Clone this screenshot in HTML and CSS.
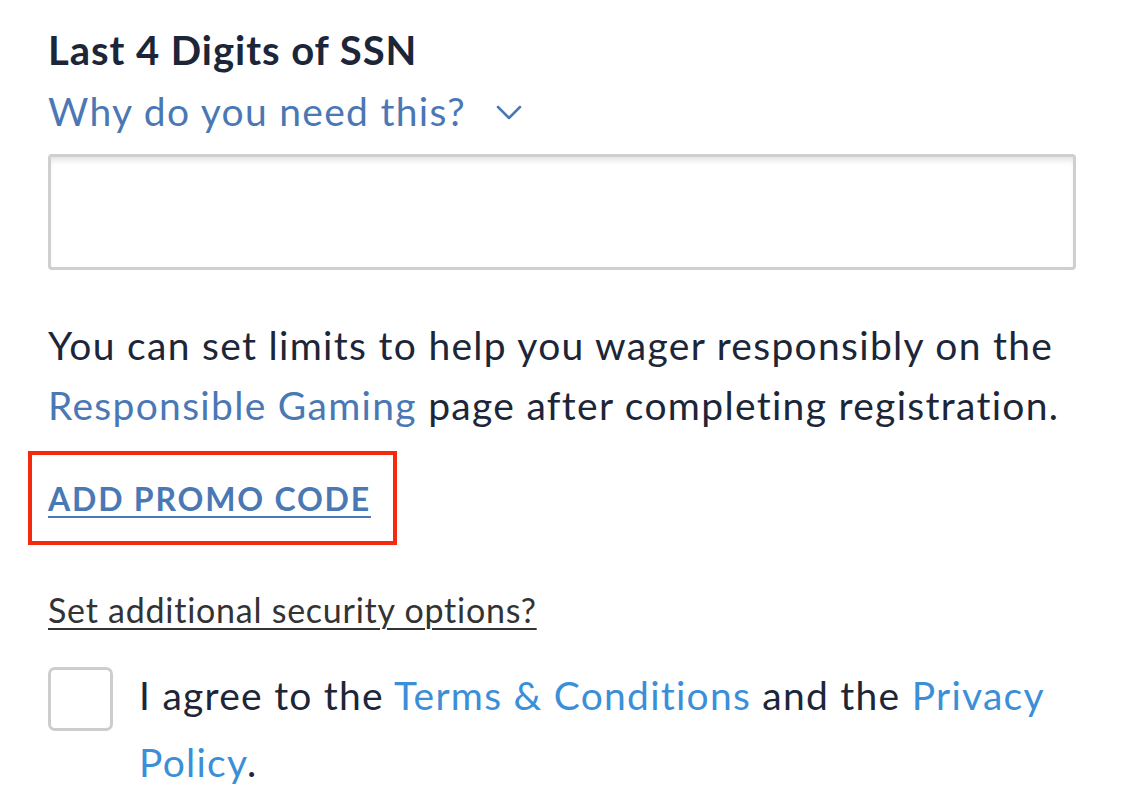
FILE: index.html
```html
<!DOCTYPE html>
<html>
<head>
<meta charset="utf-8">
<link rel="stylesheet" href="styles.css">
</head>
<body>
<div class="form">
  <div class="label">Last 4 Digits of SSN</div>
  <div class="why">Why do you need this?
    <svg class="chev" width="26" height="16" viewBox="0 0 26 16"><path d="M2 2 L13 13 L24 2" fill="none" stroke="#4a78b5" stroke-width="2.5" stroke-linecap="round" stroke-linejoin="round"/></svg>
  </div>
  <div class="input"></div>
  <p class="info">You can set limits to help you wager responsibly on the <span class="link">Responsible Gaming</span> page after completing registration.</p>
  <div class="promo-box"><span class="promo">ADD PROMO CODE</span></div>
  <div class="security">Set additional security options?</div>
  <div class="agree">
    <div class="checkbox"></div>
    <div class="agree-text">I agree to the <span class="link2">Terms &amp; Conditions</span> and the <span class="link2">Privacy Policy</span>.</div>
  </div>
</div>
</body>
</html>
```
FILE: styles.css
```css
html, body {
  margin: 0;
  padding: 0;
  background: #ffffff;
}
body {
  font-family: Lato, "Noto Sans", sans-serif;
  color: #1c2638;
}
.form {
  padding: 0 49px 0 48px;
  display: flex;
  flex-direction: column;
}
.label {
  font-size: 40px;
  font-weight: 700;
  letter-spacing: 0.95px;
  line-height: 48px;
  margin-top: 26px;
  color: #1c2638;
}
.why {
  font-size: 39px;
  letter-spacing: 1.3px;
  line-height: 48px;
  margin-top: 13px;
  color: #4a78b5;
  display: flex;
  align-items: center;
}
.chev {
  margin-left: 30px;
  margin-top: 4px;
}
.input {
  margin-top: 19px;
  height: 110px;
  border: 3px solid #cfcfcf;
  border-radius: 4px;
  box-shadow: inset 0 6px 6px -3px rgba(0,0,0,0.12);
}
.info {
  margin: 45px 0 0 0;
  font-size: 39px;
  letter-spacing: 1.3px;
  line-height: 60px;
  color: #1c2638;
}
.link { color: #4a78b5; }
.promo-box {
  margin: 16px 0 0 -20px;
  border: 4px solid #f5290d;
  display: flex;
  align-items: center;
  padding-left: 16px;
  box-sizing: border-box;
  width: 369px;
  height: 94px;
}
.promo {
  font-size: 32px;
  font-weight: 700;
  letter-spacing: 1.8px;
  color: #4a78b5;
  text-decoration: underline;
  text-decoration-thickness: 2px;
  text-underline-offset: 5px;
}
.security {
  margin-top: 43px;
  font-size: 34px;
  letter-spacing: 0.75px;
  line-height: 44px;
  color: #333333;
  text-decoration: underline;
  text-decoration-thickness: 2px;
  text-underline-offset: 5px;
}
.agree {
  margin-top: 35px;
  display: flex;
  gap: 26px;
}
.checkbox {
  flex: none;
  width: 65px;
  height: 64px;
  box-sizing: border-box;
  border: 3px solid #cdcdcd;
  border-radius: 7px;
}
.agree-text {
  font-size: 39px;
  letter-spacing: 1.25px;
  line-height: 67px;
  margin-top: -5px;
  color: #1c2638;
}
.link2 { color: #3b8fd8; }
```
